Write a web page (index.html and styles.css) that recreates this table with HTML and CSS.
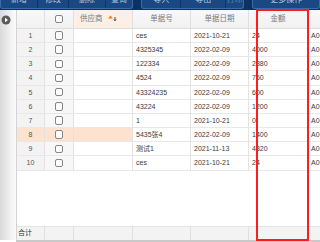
FILE: index.html
```html
<!DOCTYPE html>
<html lang="zh">
<head>
<meta charset="utf-8">
<link rel="stylesheet" href="styles.css">
</head>
<body>
<div class="page">
  <div class="toolbar">
    <div class="btn-group g1">
      <span class="btn w37">新增</span><span class="btn w31">修改</span><span class="btn w37">删除</span><span class="btn grow">查询</span>
    </div>
    <div class="btn-group g2">
      <span class="btn w39">导入</span><span class="btn w45">导出</span><span class="btn grow dim">打印</span>
    </div>
    <div class="btn-group g3">
      <span class="btn grow">更多操作</span>
    </div>
  </div>
  <div class="main">
    <div class="side">
      <svg class="play" width="10" height="10" viewBox="0 0 10 10"><circle cx="5" cy="5" r="4.5" fill="#5a5a5a"/><path d="M4 2.8 L7 5 L4 7.2 Z" fill="#fff"/></svg>
    </div>
    <div class="grid">
      <div class="row head">
        <div class="c num"></div>
        <div class="c chk"><span class="box"></span></div>
        <div class="c sorted">供应商 <svg class="sort" width="10" height="8" viewBox="0 0 10 8"><path d="M1 4.5 L3.5 1.5 L6 4.5 Z" fill="#f07a1c"/><path d="M8 3 V6.5 M7 5.5 L8 6.8 L9 5.5" stroke="#333" stroke-width="0.9" fill="none"/></svg></div>
        <div class="c">单据号</div>
        <div class="c">单据日期</div>
        <div class="c">金额</div>
        <div class="c"></div>
      </div>
      <div class="row"><div class="c num">1</div><div class="c chk"><span class="box"></span></div><div class="c"></div><div class="c t">ces</div><div class="c t">2021-10-21</div><div class="c t">24</div><div class="c t">A0</div></div>
      <div class="row"><div class="c num">2</div><div class="c chk"><span class="box"></span></div><div class="c"></div><div class="c t">4325345</div><div class="c t">2022-02-09</div><div class="c t">4000</div><div class="c t">A0</div></div>
      <div class="row"><div class="c num">3</div><div class="c chk"><span class="box"></span></div><div class="c"></div><div class="c t">122334</div><div class="c t">2022-02-09</div><div class="c t">2380</div><div class="c t">A0</div></div>
      <div class="row"><div class="c num">4</div><div class="c chk"><span class="box"></span></div><div class="c"></div><div class="c t">4524</div><div class="c t">2022-02-09</div><div class="c t">760</div><div class="c t">A0</div></div>
      <div class="row"><div class="c num">5</div><div class="c chk"><span class="box"></span></div><div class="c"></div><div class="c t">43324235</div><div class="c t">2022-02-09</div><div class="c t">600</div><div class="c t">A0</div></div>
      <div class="row"><div class="c num">6</div><div class="c chk"><span class="box"></span></div><div class="c"></div><div class="c t">43224</div><div class="c t">2022-02-09</div><div class="c t">1200</div><div class="c t">A0</div></div>
      <div class="row"><div class="c num">7</div><div class="c chk"><span class="box"></span></div><div class="c"></div><div class="c t">1</div><div class="c t">2021-10-21</div><div class="c t">0</div><div class="c t">A0</div></div>
      <div class="row hl"><div class="c num">8</div><div class="c chk"><span class="box"></span></div><div class="c"></div><div class="c t">5435张4</div><div class="c t">2022-02-09</div><div class="c t">1400</div><div class="c t">A0</div></div>
      <div class="row"><div class="c num">9</div><div class="c chk"><span class="box"></span></div><div class="c"></div><div class="c t">测试1</div><div class="c t">2021-11-13</div><div class="c t">4320</div><div class="c t">A0</div></div>
      <div class="row"><div class="c num">10</div><div class="c chk"><span class="box"></span></div><div class="c"></div><div class="c t">ces</div><div class="c t">2021-10-21</div><div class="c t">24</div><div class="c t">A0</div></div>
      <div class="empty"></div>
      <div class="row foot"><div class="c sum">合计</div><div class="c"></div><div class="c"></div><div class="c"></div><div class="c"></div><div class="c"></div><div class="c"></div></div>
    </div>
  </div>
  <div class="scrollbar"></div>
  <div class="mark"></div>
</div>
</body>
</html>
```
FILE: styles.css
```css
* { box-sizing: border-box; }
html, body { margin: 0; padding: 0; }
body {
  width: 320px;
  height: 242px;
  overflow: hidden;
  background: #fff;
  font-family: "Liberation Sans", Arial, "Noto Sans CJK SC", sans-serif;
  color: #333;
}
.page {
  position: relative;
  width: 320px;
  height: 242px;
  display: flex;
  flex-direction: column;
  overflow: hidden;
}
.toolbar {
  height: 10px;
  flex: none;
  background: #0c3263;
  display: flex;
  gap: 8px;
  overflow: hidden;
}
.btn-group {
  height: 8.5px;
  display: flex;
  background: #1a4882;
  border: 1px solid #3d6aa6;
  border-top: none;
  border-radius: 0 0 3px 3px;
  overflow: hidden;
}
.g1 { width: 138px; }
.g2 { width: 107px; }
.g3 { width: 70px; }
.btn {
  display: block;
  height: 100%;
  border-right: 1px solid #0f3568;
  color: #b9c9df;
  font-size: 8px;
  line-height: 0;
  text-align: center;
  overflow: hidden;
}
.btn:last-child { border-right: none; }
.btn.grow { flex: 1; }
.btn.dim { color: #5f7ea8; }
.w37 { width: 37px; }
.w31 { width: 31px; }
.w39 { width: 39px; }
.w45 { width: 45px; }
.main {
  flex: 1;
  display: flex;
  min-height: 0;
}
.side {
  width: 16px;
  flex: none;
  background: linear-gradient(to right, #d9d9d9, #f6f6f6 80%, #fbfbfb);
  padding: 5px 0 0 1px;
}
.play { display: block; }
.grid {
  flex: 1;
  display: flex;
  flex-direction: column;
  border-left: 1px solid #d4d4d4;
  min-width: 0;
  overflow: hidden;
}
.row {
  display: grid;
  grid-template-columns: 28px 29px 59px 58px 58px 59px 40px;
  height: 14.17px;
  flex: none;
}
.c {
  border-right: 1px solid #e3e3e3;
  border-bottom: 1px solid #e8e8e8;
  font-size: 7px;
  line-height: 13px;
  white-space: nowrap;
  overflow: hidden;
}
.t { padding-left: 3px; color: #3a3a3a; }
.num { background: #f3f3f3; text-align: center; color: #555; }
.chk {
  background: #f7f7f7;
  display: flex;
  align-items: center;
  justify-content: center;
}
.box {
  width: 8.5px;
  height: 8.5px;
  border: 1px solid #858585;
  border-radius: 2px;
  background: #fff;
}
.hl .num, .hl .chk, .hl .c:nth-child(3) { background: #fde3cf; }
.head { height: 19px; }
.head .c {
  background: linear-gradient(#f8f8f8, #f1f1f1);
  border-bottom: 1px solid #dedede;
  border-right-color: #e0e0e0;
  font-size: 7.5px;
  line-height: 18px;
  color: #7a7a7a;
  text-align: center;
}
.head .chk { display: flex; }
.head .c.sorted {
  background: #fdefe3;
  padding-left: 6px;
  text-align: left;
}
.sort { vertical-align: -1px; margin-left: 2px; }
.empty { flex: 1; }
.foot { height: 14px; }
.foot .c {
  background: #f3f3f3;
  border-top: 1px solid #e4e4e4;
  border-bottom: none;
  border-right-color: #e0e0e0;
  line-height: 12px;
}
.sum { padding-left: 1px; color: #333; }
.scrollbar {
  height: 2px;
  flex: none;
  margin-left: 16px;
  background: #c9c9c9;
}
.mark {
  position: absolute;
  left: 255.5px;
  top: 9px;
  width: 53.5px;
  height: 232px;
  border: 2px solid #ff1c1c;
}
```
